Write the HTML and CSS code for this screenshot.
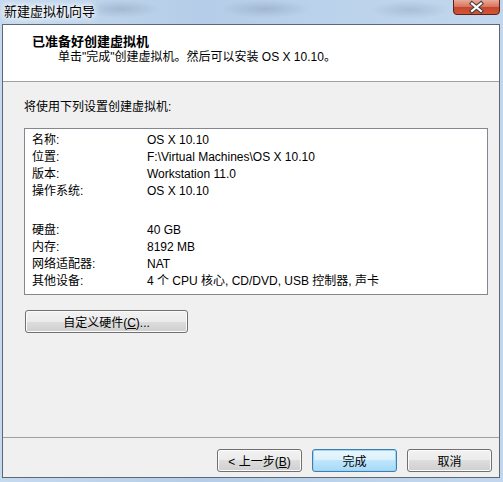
FILE: index.html
```html
<!DOCTYPE html>
<html lang="zh-CN">
<head>
  <meta charset="UTF-8">
  <meta name="viewport" content="width=device-width, initial-scale=1">
  <title>新建虚拟机向导</title>
  <link rel="stylesheet" href="styles.css">
</head>
<body>

  <div class="window">
    <div class="titlebar">
      <span class="title">新建虚拟机向导</span>
      <div class="close">
        <svg width="47" height="15" viewBox="0 0 47 15">
          <defs>
            <linearGradient id="red" x1="0" y1="0" x2="0" y2="1">
              <stop offset="0" stop-color="#e9a99a"/>
              <stop offset="0.45" stop-color="#d9755f"/>
              <stop offset="0.5" stop-color="#c7452c"/>
              <stop offset="1" stop-color="#d2573a"/>
            </linearGradient>
          </defs>
          <path d="M0.5 0 V11 Q0.5 14.5 4 14.5 H43 Q46.5 14.5 46.5 11 V0" fill="url(#red)" stroke="#5b2117"/>
          <path d="M19 3.5 L28 11 M28 3.5 L19 11" stroke="#3b3b3b" stroke-width="4.2" stroke-linecap="square"/>
          <path d="M19 3.5 L28 11 M28 3.5 L19 11" stroke="#ffffff" stroke-width="2.2" stroke-linecap="square"/>
        </svg>
      </div>
    </div>

    <div class="client">
      <div class="header">
        <div class="header-title">已准备好创建虚拟机</div>
        <div class="header-sub">单击"完成"创建虚拟机。然后可以安装 OS X 10.10。</div>
      </div>

      <div class="content">
        <p class="intro">将使用下列设置创建虚拟机:</p>

        <div class="summary">
          <div class="row"><span>名称:</span><span>OS X 10.10</span></div>
          <div class="row"><span>位置:</span><span>F:\Virtual Machines\OS X 10.10</span></div>
          <div class="row"><span>版本:</span><span>Workstation 11.0</span></div>
          <div class="row"><span>操作系统:</span><span>OS X 10.10</span></div>
          <div class="gap"></div>
          <div class="row"><span>硬盘:</span><span>40 GB</span></div>
          <div class="row"><span>内存:</span><span>8192 MB</span></div>
          <div class="row"><span>网络适配器:</span><span>NAT</span></div>
          <div class="row"><span>其他设备:</span><span>4 个 CPU 核心, CD/DVD, USB 控制器, 声卡</span></div>
        </div>

        <button class="btn btn-wide">自定义硬件(<u>C</u>)...</button>
      </div>

      <div class="footer">
        <button class="btn">&lt; 上一步(<u>B</u>)</button>
        <button class="btn btn-default">完成</button>
        <button class="btn">取消</button>
      </div>
    </div>
  </div>

</body>
</html>
```

FILE: styles.css
```css
body {
  margin: 0;
  font-family: "Liberation Sans", "Noto Sans CJK SC", sans-serif;
  font-size: 12px;
  color: #000;
}
.window {
  width: 503px;
  height: 482px;
  box-sizing: border-box;
  padding: 0 3px 4px 2px;
  display: flex;
  flex-direction: column;
  background:
    radial-gradient(ellipse 40px 9px at 120px 9px, rgba(120, 140, 165, 0.35), transparent),
    radial-gradient(ellipse 45px 9px at 265px 9px, rgba(120, 140, 165, 0.35), transparent),
    radial-gradient(ellipse 40px 9px at 410px 10px, rgba(120, 140, 165, 0.3), transparent),
    linear-gradient(90deg, #c5daef, #b5cde8 40%, #bcd3ec 70%, #c2d7ed);
}
.titlebar {
  height: 24px;
  display: flex;
  align-items: flex-start;
}
.title {
  padding: 3px 0 0 2px;
  font-size: 13px;
  line-height: 18px;
  text-shadow: 0 0 4px #fff, 0 0 8px #fff, 0 0 8px #fff;
}
.close {
  margin-left: auto;
  height: 15px;
}
.close svg {
  display: block;
}
.client {
  flex: 1;
  display: flex;
  flex-direction: column;
  border: 1px solid #5e6873;
  background-color: #f0f0f0;
}
.header {
  height: 56px;
  box-sizing: content-box;
  background: #fff;
  border-bottom: 1px solid #a0a0a0;
  padding-top: 0;
}
.header-title {
  font-weight: bold;
  font-size: 13px;
  line-height: 14px;
  padding: 10px 0 0 29px;
}
.header-sub {
  line-height: 16px;
  padding-left: 55px;
}
.content {
  padding-left: 21px;
}
.intro {
  margin: 17px 0 13px;
  line-height: 16px;
}
.summary {
  width: 464px;
  box-sizing: border-box;
  border: 1px solid #828790;
  background: #fff;
  padding: 3px 0 4px 7px;
}
.row {
  display: grid;
  grid-template-columns: 115px 1fr;
  line-height: 17px;
  height: 17px;
}
.gap {
  height: 22px;
}
.btn {
  height: 23px;
  width: 85px;
  padding: 0;
  font: inherit;
  color: #000;
  border: 1px solid #707070;
  border-radius: 3px;
  box-shadow: inset 0 0 0 1px #fbfbfb;
  background: linear-gradient(#f2f2f2 0%, #ebebeb 50%, #dddddd 50%, #cfcfcf 100%);
}
.btn-wide {
  width: 163px;
  margin: 15px 0 0 1px;
}
.btn-default {
  border-color: #3c7fb1;
  box-shadow: inset 0 0 0 1px #9fd5f3;
  background: linear-gradient(#eaf6fd 0%, #d9f0fc 50%, #bee6fd 50%, #a7d9f5 100%);
}
.footer {
  margin-top: auto;
  border-top: 1px solid #a0a0a0;
  padding: 11px 7px 5px 0;
  display: flex;
  justify-content: flex-end;
  gap: 10px;
}
```
